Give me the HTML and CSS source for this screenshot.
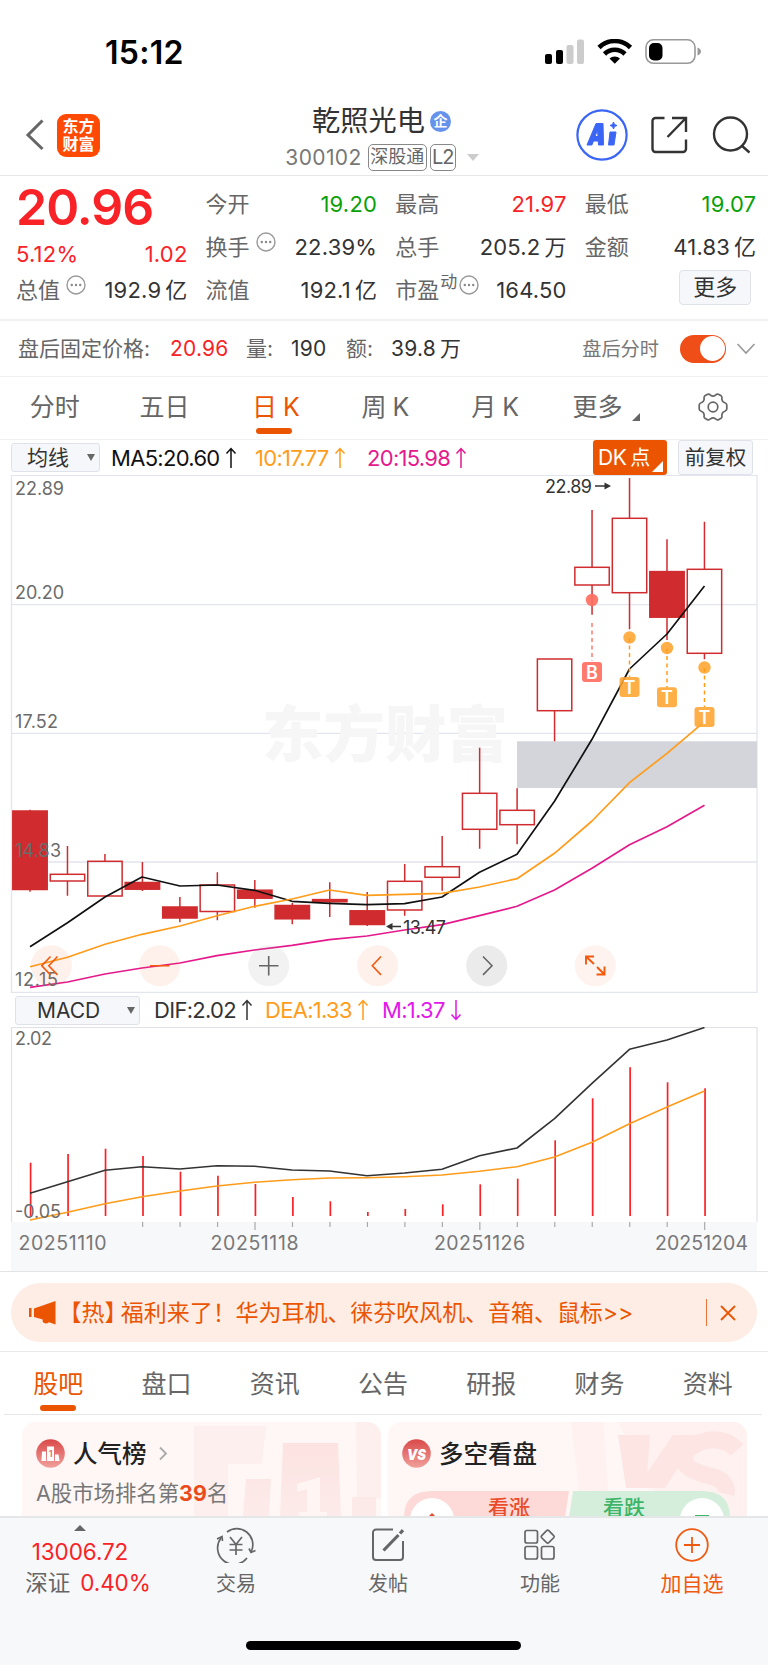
FILE: index.html
```html
<!DOCTYPE html>
<html lang="zh-CN">
<head>
<meta charset="utf-8">
<title>乾照光电 300102</title>
<link rel="stylesheet" href="styles.css">
</head>
<body>
<div class="app">
  <header class="status">
    <span class="clock">15:12</span>
    <svg class="status-icons" width="160" height="28" viewBox="0 0 160 28">
      <rect x="1" y="15" width="7" height="10" rx="2"/><rect x="12" y="11" width="7" height="14" rx="2"/>
      <rect x="22.500" y="6" width="7" height="19" rx="2" fill="#ccc"/><rect x="33" y="0.500" width="7" height="24.500" rx="2" fill="#ccc"/>
      <g fill="none" stroke="#000" stroke-width="4.600"><path d="M55 8.500a22.500 22.500 0 0 1 31.500 0"/><path d="M60.500 15a14.500 14.500 0 0 1 20.500 0"/></g>
      <path d="M65.500 19.500a8 8 0 0 1 10.500 0l-5.200 5.300z"/>
      <rect x="102" y="0.800" width="49" height="23.500" rx="7.500" fill="#fff" stroke="#999" stroke-width="1.600"/>
      <rect x="105" y="4" width="13.500" height="17.500" rx="5"/>
      <path d="M153.500 8.500q3.500 1.500 3.500 4t-3.500 4z" fill="#999"/>
    </svg>
  </header>

  <nav class="titlebar">
    <div class="tb-left">
      <svg width="20" height="32" viewBox="0 0 20 32" fill="none" stroke="#666" stroke-width="3"><path d="M17.500 1.500L3 16l14.500 14"/></svg>
      <div class="logo"><span>东方</span><span>财富</span></div>
    </div>
    <div class="tb-mid">
      <div class="name">乾照光电<span class="corp">企</span></div>
      <div class="code"><span class="num">300102</span><span class="tag tag-a">深股通</span><span class="tag tag-b">L2</span><i class="caret"></i></div>
    </div>
    <div class="tb-right">
      <svg width="52" height="52" viewBox="0 0 52 52"><circle cx="26" cy="26" r="24.600" fill="#fff" stroke="#3b66f5" stroke-width="2.200"/>
        <path fill="#3b66f5" fill-rule="evenodd" d="M20 14.500h7L27.500 36h-5l-.3-4h-4.700l-1.600 4H11zM21.500 21L19 27.500h3zM34 23h6L38 36h-5.500zM37.500 13l1 2.500 2.500 1-2.500 1-1 2.500-1-2.500-2.500-1 2.500-1z" stroke="#3b66f5" stroke-width="1" stroke-linejoin="round"/></svg>
      <svg class="share" width="38" height="38" viewBox="0 0 38 38" fill="none" stroke="#333" stroke-width="2.400"><path d="M14.500 2H5.500a3 3 0 0 0-3 3v28a3 3 0 0 0 3 3H33a3 3 0 0 0 3-3V23.500"/><path d="M22 2h14v14M35.500 2.500L17.500 21"/></svg>
      <svg class="search" width="38" height="38" viewBox="0 0 38 38" fill="none" stroke="#333" stroke-width="2.400"><circle cx="18.500" cy="18" r="16.500"/><path d="M29.500 29.500l8 7"/></svg>
    </div>
  </nav>

  <section class="quote">
    <div class="main">
      <div class="price">20.96</div>
      <div class="row pct"><span class="red">5.12%</span><span class="red">1.02</span></div>
    </div>
    <div class="row last"><label>总值<svg class="dots"><use href="#more"/></svg></label><b>192.9<em>亿</em></b></div>
    <div class="row c2 r1"><label>今开</label><b class="green">19.20</b></div>
    <div class="row c3 r1"><label>最高</label><b class="red">21.97</b></div>
    <div class="row c4 r1"><label>最低</label><b class="green">19.07</b></div>
    <div class="row c2 r2"><label>换手<svg class="dots"><use href="#more"/></svg></label><b>22.39%</b></div>
    <div class="row c3 r2"><label>总手</label><b>205.2<em>万</em></b></div>
    <div class="row c4 r2"><label>金额</label><b>41.83<em>亿</em></b></div>
    <div class="row c2 r3"><label>流值</label><b>192.1<em>亿</em></b></div>
    <div class="row c3 r3"><label>市盈<sup>动</sup><svg class="dots tight"><use href="#more"/></svg></label><b>164.50</b></div>
    <div class="row c4 r3 end"><button class="more">更多</button></div>
    <svg width="0" height="0" class="defs"><symbol id="more" viewBox="0 0 20 20"><circle cx="10" cy="10" r="9" fill="none" stroke="#999" stroke-width="1.400"/><circle cx="5.800" cy="10" r="1.200" fill="#888"/><circle cx="10" cy="10" r="1.200" fill="#888"/><circle cx="14.200" cy="10" r="1.200" fill="#888"/></symbol></svg>
  </section>

  <section class="after">
    <label>盘后固定价格:</label><b class="v1 red">20.96</b><label class="l2">量:</label><b class="v2">190</b><label class="l3">额:</label><b class="v3">39.8<em>万</em></b>
    <span class="after-t">盘后分时</span><span class="toggle"><i></i></span>
    <svg width="20" height="14" viewBox="0 0 20 14" fill="none" stroke="#999" stroke-width="1.600"><path d="M1.500 2l8.500 9 8.500-9"/></svg>
  </section>

  <nav class="periods">
    <span>分时</span><span>五日</span><span class="on">日<i>K</i></span><span>周<i>K</i></span><span>月<i>K</i></span><span>更多<s></s></span>
    <span><svg width="30" height="30" viewBox="0 0 30 30" fill="none" stroke="#666" stroke-width="1.700" stroke-linejoin="round"><path d="M9 2.600Q11 1.400 12.500 3.200Q15 5.200 17.500 3.200Q19 1.400 21 2.600L23.400 4Q24.400 5 23.800 7Q24.200 10 26.800 10.800Q28.800 11.400 28.800 13V17Q28.800 18.600 26.800 19.200Q24.200 20 23.800 23Q24.400 25 23.400 26L21 27.400Q19 28.600 17.500 26.800Q15 24.800 12.500 26.800Q11 28.600 9 27.400L6.600 26Q5.600 25 6.200 23Q5.800 20 3.200 19.200Q1.200 18.600 1.200 17V13Q1.200 11.400 3.200 10.800Q5.800 10 6.200 7Q5.600 5 6.600 4Z"/><circle cx="15" cy="15" r="4.800"/></svg></span>
  </nav>

  <div class="indic ma">
    <button class="pick">均线<i></i></button>
    <span class="i1">MA5:20.60<svg class="arr"><use href="#up"/></svg></span><span class="i2">10:17.77<svg class="arr"><use href="#up"/></svg></span><span class="i3">20:15.98<svg class="arr"><use href="#up"/></svg></span>
    <button class="dk">DK<em>点</em><i></i></button><button class="fq">前复权</button>
    <svg width="0" height="0" class="defs"><symbol id="up" viewBox="0 0 12 22"><path d="M6 21V2M1.500 6.500L6 1.500l4.500 5" fill="none" stroke="currentColor" stroke-width="1.500"/></symbol></svg>
  </div>

  <svg class="chart" width="768" height="518" viewBox="0 475 768 518">
    <g stroke="#e3e5ee" stroke-width="1.300" fill="none"><path d="M11.500 475.300H757V992.500H11.500zM12 604.700H757M12 733.300H757M12 862H757"/></g>
    <text class="wm" x="262" y="757" textLength="246" lengthAdjust="spacingAndGlyphs">东方财富</text>
    <rect x="517" y="741.300" width="240" height="46.700" fill="#d3d5da"/>
    <g id="candles" stroke="#d02c2f" stroke-width="1.500"></g>
    <g fill="none" stroke-width="1.700" stroke-linejoin="round">
      <polyline stroke="#111" points="30,946.700 67.500,922.700 105,897 142,877 180,886 217,885 254.500,890.300 292,901.300 329.500,903.300 367,904.700 404.500,903.700 442,897 479.500,872.300 517,854.300 554.500,801.300 592,739.300 629.500,669 667,634 704.500,586"/>
      <polyline stroke="#ff9c1a" points="30,966.700 67.500,957.300 105,944.300 142,934.300 180,926 217,915.700 254.500,906.300 292,899 329.500,890 367,895.300 404.500,894.300 442,893.300 479.500,887 517,878.700 554.500,853.300 592,821 629.500,782.700 667,753.300 704.500,721.700"/>
      <polyline stroke="#e5198c" points="30,987.300 67.500,982 105,974 142,968 180,963 217,955.700 254.500,950 292,945.300 329.500,939.700 367,936 404.500,930 442,924.700 479.500,915.700 517,906.300 554.500,890 592,868.300 629.500,844.700 667,826.700 704.500,805.300"/>
    </g>
    <g fill="#ff6f61" opacity=".92"><circle cx="592" cy="600" r="6.200"/><path d="M592 623v38" stroke="#ff6f61" stroke-width="1.500" stroke-dasharray="4 3.500"/><rect x="582" y="662" width="20" height="20" rx="3"/></g>
    <g fill="#ffa42e" opacity=".87" stroke="none"><circle cx="629.500" cy="637.500" r="6.200"/><circle cx="667" cy="648" r="6.200"/><circle cx="704.500" cy="667.500" r="6.200"/><rect x="619.500" y="677" width="20" height="20" rx="3"/><rect x="657" y="687.300" width="20" height="20" rx="3"/><rect x="694.500" y="707" width="20" height="20" rx="3"/></g>
    <path d="M629.500 638v39M667 648.500v39M704.500 668v39" stroke="#ff9c1a" stroke-width="1.500" stroke-dasharray="4 3.500"/>
    <g class="badge"><text x="592" y="679">B</text><text x="629.500" y="694">T</text><text x="667" y="704.300">T</text><text x="704.500" y="724">T</text></g>
    <g class="axis"><text x="15" y="494.500" textLength="49">22.89</text><text x="15" y="598.500" textLength="49">20.20</text><text x="15" y="727.500" textLength="43">17.52</text><text x="15" y="857" textLength="46">14.83</text><text x="15" y="985.500" textLength="43">12.15</text></g>
    <g class="ext"><text x="545" y="492.500" textLength="47">22.89</text><text x="403" y="933.500" textLength="43">13.47</text></g>
    <path d="M595 486h10M401 926.500h-10" stroke="#333" stroke-width="1.500"/><path d="M611 486l-6.500-3.500v7zM386 926.500l6.500-3.500v7z" fill="#333"/>
    <g fill="#f26522" fill-opacity=".09"><circle cx="51.300" cy="965.700" r="20.500"/><circle cx="159.700" cy="965.700" r="20.500"/><circle cx="377.700" cy="965.700" r="20.500"/><circle cx="595.300" cy="965.700" r="20.500" fill-opacity=".08"/></g>
    <circle cx="268.700" cy="965.700" r="20.500" fill="#888" fill-opacity=".11"/><circle cx="486.700" cy="965.700" r="20.500" fill="#888" fill-opacity=".17"/>
    <g fill="none" stroke="#f2590d" stroke-width="1.600"><path d="M50.500 956.500l-8.700 9.200 8.700 9.200M57.500 956.500l-8.700 9.200 8.700 9.200M150 965.700h19.500M381 956.500l-8.700 9.200 8.700 9.200"/><path d="M594 956.500h-8v8M586.500 957l7.500 7M604.500 966.500v8h-8M604 974l-7-7" stroke-width="1.900"/></g>
    <g fill="none" stroke="#666" stroke-width="1.600"><path d="M259 965.700h19.500M268.700 956v19.500M483 956.500l9 9.200-9 9.200"/></g>
  </svg>

  <div class="indic macd">
    <button class="pick">MACD<i></i></button>
    <span class="j1">DIF:2.02<svg class="arr"><use href="#up"/></svg></span><span class="j2">DEA:1.33<svg class="arr"><use href="#up"/></svg></span><span class="j3">M:1.37<svg class="arr down"><use href="#up"/></svg></span>
  </div>

  <svg class="chart" width="768" height="244" viewBox="0 1027 768 244">
    <rect x="11" y="1222" width="746" height="49" fill="#f7f8fa"/>
    <path d="M11.500 1222V1027.500H757V1222" fill="none" stroke="#e0e1e6" stroke-width="1.200"/>
    <g id="bars" stroke="#fb2125" stroke-width="1.700"></g>
    <g id="ticks" stroke="#aaa" stroke-width="1.200"></g>
    <g fill="none" stroke-width="1.600" stroke-linejoin="round">
      <polyline stroke="#333" points="30,1193.300 67.500,1181.700 105,1170.300 142,1166.700 180,1169 217,1165.700 254.500,1166.300 292,1170 329.500,1171 367,1175.700 404.500,1173 442,1169.300 479.500,1155.700 517,1148 554.500,1118.700 592,1083.300 629.500,1049.300 667,1040 704.500,1027.500"/>
      <polyline stroke="#ff9c1a" points="30,1220 67.500,1212.300 105,1203.700 142,1196.700 180,1191 217,1186 254.500,1182.300 292,1179.700 329.500,1178 367,1177.700 404.500,1176.700 442,1175 479.500,1171.300 517,1166.700 554.500,1157 592,1142.300 629.500,1123.700 667,1107 704.500,1091"/>
    </g>
    <g class="axis"><text x="15" y="1045" textLength="37">2.02</text><text x="15" y="1217.500" textLength="46">-0.05</text></g>
    <g class="dates"><text x="18.500" y="1250" textLength="88">20251110</text><text x="210.500" y="1250" textLength="88">20251118</text><text x="434" y="1250" textLength="91">20251126</text><text x="655" y="1250" textLength="93">20251204</text></g>
  </svg>

  <div class="promo-wrap"><div class="promo">
    <svg width="30" height="26" viewBox="0 0 30 26" fill="#eb5502"><path d="M1 8h2.500v9H1zM6 8.500L27.500 1v23.500L21 22.300q-3.500 2.500-6.300-.3V19.500L6 17z"/></svg>
    <span class="promo-t"><span class="hot">【热】</span><span>福利来了！华为耳机、徕芬吹风机、音箱、鼠标&gt;&gt;</span></span><i></i>
    <svg class="x" width="16" height="16" viewBox="0 0 16 16" fill="none" stroke="#eb5502" stroke-width="1.800"><path d="M1 1l14 14M15 1L1 15"/></svg>
  </div></div>

  <nav class="tabs"><span class="on">股吧</span><span>盘口</span><span>资讯</span><span>公告</span><span>研报</span><span>财务</span><span>资料</span></nav>

  <section class="cards">
    <article class="card">
      <svg class="art" width="359" height="94" viewBox="0 0 359 94">
        <defs><linearGradient id="fade" x2="0" y2="1"><stop stop-color="#fce3e1"/><stop offset="1" stop-color="#fcebea"/></linearGradient></defs>
        <path d="M172 4H244L240 42H206V94H172zM334 0h25v76h-24z" fill="#fbe3e0" opacity=".38"/>
        <path d="M224 57h25l-2 37h-26zM261 21h55l3 73h-61zM330 75h24v19h-24z" fill="url(#fade)"/><path d="M275 62l23-7v35h7v4h-28v-4h8V67l-10 3z" fill="#fff5f3"/>
      </svg>
      <div class="card-h"><svg width="29" height="29" viewBox="0 0 29 29"><defs><linearGradient id="ic" x2="0" y2="1"><stop stop-color="#d94948"/><stop offset="1" stop-color="#f1a09c"/></linearGradient></defs><circle cx="14.500" cy="14.500" r="14.300" fill="url(#ic)"/><path d="M6 12.500h4V22H5.500zM11 7.500h7V22h-7zM19 15.500h3.500L23.500 22H19z" fill="#fff"/><text class="one" x="12.700" y="18">1</text></svg>
      <h3>人气榜</h3><svg class="chev" width="9" height="15" viewBox="0 0 9 15" fill="none" stroke="#aaa" stroke-width="1.800"><path d="M1 1.500l6 6-6 6"/></svg></div>
      <p>A股市场排名第<strong>39</strong>名</p>
    </article>
    <article class="card vs">
      <svg class="art" width="359" height="94" viewBox="0 0 359 94"><path d="M183 0h32l7 94h-28zM230 0h129v94h-80z" fill="#fbe3e0" opacity=".3"/><path d="M230 13h32l-3 38 26-38h26L277 66h-39z" fill="#fce5e3"/><path d="M349 28Q335 13 313 20Q291 29 298 43Q304 50 326 55Q341 61 338 72" fill="none" stroke="#fce5e3" stroke-width="17"/></svg>
      <div class="card-h"><svg width="29" height="29" viewBox="0 0 29 29"><circle cx="14.500" cy="14.500" r="14.300" fill="url(#ic)"/><text class="vs-t" x="5" y="20.500" textLength="19" lengthAdjust="spacingAndGlyphs">VS</text></svg><h3>多空看盘</h3></div>
      <svg class="vote" width="326" height="26" viewBox="0 0 326 26"><path d="M0 26Q0 0 28 0H165l-4 26z" fill="#fddad7"/><path d="M169 0H298Q326 0 326 26H165z" fill="#d5eedc"/><circle cx="28" cy="29" r="22" fill="#fff"/><circle cx="298" cy="29" r="22" fill="#fff"/><path d="M28 22l5 5h-10z" fill="#e8482a"/><path d="M291 24h14v2h-14z" fill="#3eb66a"/><text x="84" y="24" fill="#ea4b2b" textLength="42">看涨</text><text x="199" y="24" fill="#3db468" textLength="42">看跌</text></svg>
    </article>
  </section>

  <footer class="foot">
    <div class="foot-row">
      <div class="index"><i></i><b>13006.72</b><div><span>深证</span><b>0.40%</b></div></div>
      <div class="item"><svg width="40" height="36" viewBox="0 0 40 36" fill="none" stroke="#666" stroke-width="1.700"><path d="M11 5A16 16 0 0 1 35.500 24M31 31A16 16 0 0 1 5 11"/><path d="M1 12l5-2.500.5 4.500M39.500 23.500l-4.500 2-2-4M14 10l6 7.500 6-7.500M13.500 17.500h13M13.500 23h13M20 17.500v10.500"/></svg><span>交易</span></div>
      <div class="item"><svg width="36" height="36" viewBox="0 0 36 36" fill="none" stroke="#666" stroke-width="2"><path d="M23 2.500H6a3 3 0 0 0-3 3V30a3 3 0 0 0 3 3H30a3 3 0 0 0 3-3V14"/><path d="M13.500 23.500L28.500 8M30 6.500l3-3.300" stroke-width="3.200"/></svg><span>发帖</span></div>
      <div class="item"><svg width="36" height="36" viewBox="0 0 36 36" fill="none" stroke="#666" stroke-width="1.700"><rect x="3" y="3.500" width="12.500" height="12.500" rx="2"/><rect x="3" y="19.500" width="12.500" height="12.500" rx="2"/><rect x="19.500" y="19.500" width="12.500" height="12.500" rx="2"/><rect x="20.700" y="4.700" width="10" height="10" rx="1.500" transform="rotate(45 25.700 9.700)"/></svg><span>功能</span></div>
      <div class="item add"><svg width="36" height="36" viewBox="0 0 36 36" fill="none" stroke="#f05a10" stroke-width="1.800"><circle cx="18" cy="18" r="15.800"/><path d="M10 18h16M18 10v16"/></svg><span>加自选</span></div>
    </div>
    <div class="home"></div>
  </footer>
</div>
<script src="chart.js"></script>
</body>
</html>
```
FILE: styles.css
```css
* { box-sizing: border-box; }
body { margin: 0; background: #fff; color: #333; font-family: Inter, "Noto Sans CJK SC", sans-serif; font-weight: 400; }
.app { width: 768px; height: 1665px; overflow: hidden; display: flex; flex-direction: column; }
.app > * { flex: none; }
b, em, i, label, s { font-weight: 400; font-style: normal; }
button { font: inherit; color: inherit; padding: 0; margin: 0; }
svg { display: block; flex: none; }
.defs { position: absolute; }
.red { color: #f92226; }
.green { color: #09a009; }

.status { height: 104px; display: flex; justify-content: space-between; padding: 39px 64px 0 105px; }
.clock { font-size: 32px; line-height: 28px; font-weight: 600; color: #000; letter-spacing: .3px; }

.titlebar { height: 72px; border-bottom: 1px solid #e6e6e6; display: grid; grid-template-columns: 240px 288px 240px; }
.tb-left { display: flex; align-items: center; padding: 0 0 9px 25px; gap: 12px; }
.logo { width: 43px; height: 43px; border-radius: 9px; background: #ff4a05; color: #fff; display: flex; flex-direction: column; align-items: center; justify-content: center; font-weight: 700; font-size: 16px; line-height: 18px; }
.tb-mid { display: flex; flex-direction: column; align-items: center; }
.name { height: 34px; line-height: 32px; font-size: 28.200px; display: flex; align-items: center; margin-left: -5px; }
.corp { width: 21px; height: 21px; border-radius: 50%; background: #6592ea; color: #fff; font-size: 14px; line-height: 20px; text-align: center; font-weight: 700; margin-left: 5px; }
.code { display: flex; align-items: center; height: 30px; margin-top: 4px; color: #777; margin-left: -4px; }
.num { font-size: 21px; letter-spacing: .4px; }
.tag { border: 1.300px solid #888; border-radius: 5px; height: 27px; line-height: 24px; text-align: center; color: #666; white-space: nowrap; }
.tag-a { font-size: 18px; width: 59px; margin-left: 6px; }
.tag-b { font-size: 20px; width: 26px; margin-left: 3px; letter-spacing: -1px; }
.caret { border: 6.500px solid transparent; border-top: 7px solid #ccc; border-bottom: 0; margin-left: 11px; }
.tb-right { display: flex; align-items: flex-start; padding-left: 48px; }
.tb-right svg { margin-top: 5px; }
.tb-right .share { margin: 12px 0 0 22px; }
.tb-right .search { margin: 12px 0 0 24px; }

.quote { height: 145px; border-bottom: 2px solid #f1f1f1; padding: 6px 11px 0 16px; display: grid; grid-template-columns: repeat(4, 171.500px); column-gap: 18.100px; grid-template-rows: 43px 43px 43px; font-size: 22px; line-height: 30px; }
.main { grid-area: 1 / 1 / 3 / 2; }
.price { font-size: 50px; font-weight: 600; color: #f92226; line-height: 50px; letter-spacing: -1px; }
.row { display: flex; justify-content: space-between; align-items: center; }
.row label { color: #666; display: flex; align-items: center; white-space: nowrap; }
.row b { letter-spacing: .2px; white-space: nowrap; }
.row em { margin-left: 4px; }
.pct { height: 36px; margin-top: 4px; letter-spacing: .2px; }
.last { grid-area: 3 / 1; }
.c2 { grid-column: 2; } .c3 { grid-column: 3; } .c4 { grid-column: 4; }
.r1 { grid-row: 1; } .r2 { grid-row: 2; } .r3 { grid-row: 3; }
.dots { width: 20px; height: 20px; margin: -9px 0 0 6px; }
.dots.tight { margin-left: 2px; }
sup { font-size: 17px; line-height: 17px; margin: -14px 0 0 1px; }
.end { justify-content: flex-end; padding-right: 5px; }
.more { width: 72px; height: 35px; border: 1px solid #dfe2e8; border-radius: 4px; background: #f6f7fa; font-size: 22px; line-height: 31px; margin-top: -4px; }

.after { height: 56px; border-bottom: 1px solid #f0f0f0; display: flex; align-items: center; padding-left: 18px; font-size: 21px; line-height: 30px; }
.after label { color: #666; white-space: nowrap; }
.after b { letter-spacing: .2px; white-space: nowrap; }
.after em { margin-left: 4px; }
.v1 { width: 58px; margin-left: 20px; }
.l2 { margin-left: 18px; width: 28px; }
.v2 { width: 37px; margin-left: 17px; }
.l3 { margin-left: 18px; width: 28px; }
.v3 { width: 71px; margin-left: 17px; }
.after-t { margin-left: auto; font-size: 19.200px; color: #777; }
.toggle { width: 46px; height: 28px; border-radius: 14px; background: #f04e18; margin: 0 10px 0 21px; display: flex; justify-content: flex-end; align-items: center; padding-right: 1.500px; }
.toggle i { width: 25px; height: 25px; border-radius: 50%; background: #fff; }
.after svg { margin-right: 12px; }

.periods { height: 63px; border-bottom: 1px solid #f0f0f0; display: grid; grid-template-columns: repeat(7, 1fr); }
.periods span { display: flex; align-items: center; justify-content: center; font-size: 25px; line-height: 30px; color: #666; position: relative; padding-bottom: 2px; }
.periods i { margin-left: 6px; margin-right: -3px; }
.periods s { border-left: 8px solid transparent; border-bottom: 8px solid #666; margin: 20px -6px 0 10px; }
.on { color: #eb5502 !important; }
.on::after { content: ""; position: absolute; width: 36px; height: 6px; border-radius: 3px; background: #eb5502; bottom: 5px; left: 50%; margin-left: -18px; }

.indic { height: 35px; display: flex; align-items: center; padding-left: 11px; font-size: 22px; white-space: nowrap; }
.indic > span { display: flex; align-items: center; letter-spacing: -.7px; }
.arr { width: 12px; height: 22px; margin-left: 5px; }
.down { transform: rotate(180deg); }
.pick { width: 89px; height: 29px; border: 1px solid #dfe2e8; border-radius: 3px; background: #f6f7fa; font-size: 21px; line-height: 27px; display: flex; align-items: center; padding-left: 15px; }
.pick i { border: 4.500px solid transparent; border-top: 7px solid #666; border-bottom: 0; margin-left: auto; margin-right: 4px; }
.i1 { margin-left: 11px; width: 144px; color: #111; }
.i2 { width: 112px; color: #ff9c1a; }
.i3 { color: #e5198c; }
.dk { width: 74px; height: 35px; border: 0; border-radius: 3px; background: #eb5502; color: #fff; font-size: 21px; line-height: 30px; display: flex; align-items: center; padding-left: 5px; margin-left: auto; margin-right: 11px; letter-spacing: -.5px; position: relative; }
.dk em { margin-left: 4px; font-size: 20px; }
.dk i { position: absolute; right: 4px; bottom: 3px; border-left: 11px solid transparent; border-bottom: 11px solid #fff; }
.fq { width: 75px; height: 35px; border: 1px solid #dfe2e8; border-radius: 3px; background: #f6f7fa; font-size: 20.500px; line-height: 32px; margin-right: 15px; }
.macd { height: 34px; padding-left: 15px; }
.macd .pick { width: 125px; padding-left: 21px; }
.j1 { margin-left: 14px; width: 111px; } .j2 { width: 117px; color: #ff9c1a; } .j3 { color: #e218e8; }

.wm { font: 900 61px "Noto Sans CJK SC", sans-serif; fill: #f6f6f6; }
.axis text { font-size: 18px; fill: #6b6b6b; }
.ext text { font-size: 18px; fill: #333; }
.badge text { font-size: 18px; font-weight: 600; fill: #fff; text-anchor: middle; }
.dates text { font-size: 19.500px; fill: #777; }

.promo-wrap { height: 81px; border-top: 1px solid #e3e4e8; border-bottom: 1px solid #e9e9e9; padding: 11px 11px 0; }
.promo { height: 59px; border-radius: 30px; background: #feede5; color: #eb5502; display: flex; align-items: center; padding: 0 21px 0 17px; font-size: 23px; letter-spacing: -.05px; }
.promo-t { display: flex; white-space: nowrap; margin-left: 12px; line-height: 30px; }
.hot { font-feature-settings: "halt"; margin-right: 5px; }
.promo i { width: 1.500px; height: 27px; background: #eb7538; margin: 0 13px 0 auto; }

.tabs { height: 63px; margin: 0 6px 0 4px; border-bottom: 1px solid #e6e6e6; display: grid; grid-template-columns: repeat(7, 1fr); }
.tabs span { position: relative; text-align: center; font-size: 25px; line-height: 65px; height: 62px; color: #666; }
.tabs .on::after { bottom: 3px; }

.cards { height: 101px; padding: 7px 0 0 22px; display: flex; gap: 7px; overflow: hidden; }
.card { width: 359px; height: 110px; border-radius: 14px; background: #fff7f5; padding: 17px 0 0 14px; position: relative; overflow: hidden; }
.art { position: absolute; left: 0; top: 0; }
.card-h { position: relative; display: flex; align-items: center; height: 29px; }
.card h3 { margin: 2px 0 0 8px; font-size: 24.500px; line-height: 29px; font-weight: 500; color: #222; }
.chev { margin-left: 12px; }
.card p { position: relative; margin: 10px 0 0; font-size: 21.400px; line-height: 30px; color: #777; }
.card strong { color: #ea4b1b; font-weight: 700; }
.one { font-size: 9px; font-weight: 700; fill: #e57876; }
.vs-t { font-size: 15px; font-weight: 900; font-style: italic; fill: #fff; }
.vote { position: relative; margin: 23px 0 0 2px; }
.vote text { font-size: 21px; font-weight: 500; }

.foot { height: 149px; background: #f7f8fa; border-top: 2px solid #e5e6e8; position: relative; }
.foot-row { display: grid; grid-template-columns: 160px repeat(4, 1fr); }
.index { display: flex; flex-direction: column; align-items: center; color: #f92226; font-size: 22.500px; letter-spacing: -.1px; padding-top: 7px; }
.index i { border: 6px solid transparent; border-bottom: 6px solid #666; border-top: 0; }
.index > b { line-height: 30px; margin-top: 6px; }
.index div { display: flex; line-height: 32px; gap: 10px; margin-left: 16px; }
.index span { color: #666; letter-spacing: 0; }
.item { display: flex; flex-direction: column; align-items: center; padding-top: 9px; font-size: 20px; color: #666; }
.item span { line-height: 30px; margin-top: 6px; }
.add { color: #f05a10; }
.add span { font-size: 21px; }
.home { width: 275px; height: 9px; border-radius: 5px; background: #000; margin: 0 auto; position: absolute; left: 246px; bottom: 15px; }
```
FILE: chart.js
```js
const NS = "http://www.w3.org/2000/svg";
const step = 37.47;
function add(parent, tag, attrs) {
  const el = document.createElementNS(NS, tag);
  for (const k in attrs) el.setAttribute(k, attrs[k]);
  parent.appendChild(el);
}
// [wick top, body top, body bottom, wick bottom, filled]
const candles = [
  [809.7, 811, 889.5, 891.7, 1], [846, 874.3, 881, 895.7, 0], [854, 861.3, 896, 896, 0],
  [862, 882.5, 889.2, 891, 1], [897, 907, 918, 922.3, 1], [872.3, 885, 911.5, 920.3, 0],
  [880, 890.2, 898.2, 907.7, 1], [903, 905.5, 918.8, 924.3, 1], [882.3, 899.6, 901.8, 917, 1],
  [892, 910.8, 924.5, 926, 1], [864, 881.3, 910, 915.7, 0], [836, 866.7, 877.3, 890.7, 0],
  [747.7, 793.3, 829.3, 848.7, 0], [788.3, 810.3, 824.7, 844.3, 0], [659, 659, 710.7, 741.3, 0],
  [510, 567.3, 585, 614.7, 0], [478, 518.3, 592.7, 629.3, 0], [539.3, 571.6, 617.2, 640, 1],
  [521.7, 569.3, 653.3, 659.3, 0]
];
const cg = document.getElementById("candles");
candles.forEach(([wt, bt, bb, wb, filled], i) => {
  const x = 30 + i * step;
  add(cg, "path", { d: `M${x} ${wt}V${bt}M${x} ${bb}V${wb}` });
  add(cg, "rect", { x: x - 17.2, y: bt, width: 34.4, height: bb - bt, fill: filled ? "#d02c2f" : "none" });
});
const tops = [1162.7, 1154, 1148.7, 1156, 1171.7, 1175.7, 1184, 1197, 1201.3, 1212, 1209, 1204.3, 1184.3, 1178.7, 1140.3, 1098.3, 1067.3, 1082.3, 1088.3];
const bg = document.getElementById("bars");
const tg = document.getElementById("ticks");
tops.forEach((t, i) => {
  const x = 30.6 + i * step;
  add(bg, "path", { d: `M${x} ${t}V1216` });
  if (i > 2) add(tg, "path", { d: `M${x - .4} 1222V${i % 6 ? 1227 : 1230}` });
});
```
